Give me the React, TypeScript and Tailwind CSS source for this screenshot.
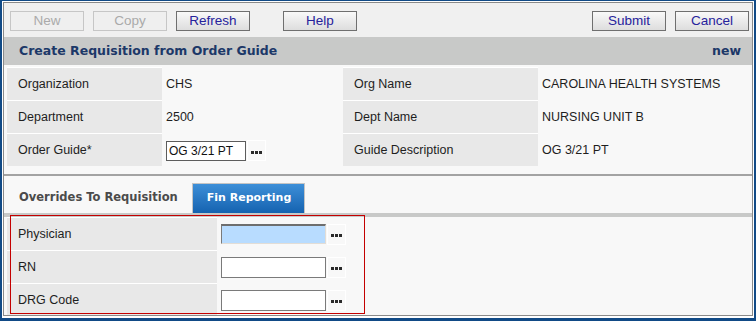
import type { ReactNode } from 'react';

const arial = "font-['Liberation_Sans',Arial,sans-serif]";
const verdana = "font-['DejaVu_Sans',Verdana,sans-serif]";

function ToolButton({ label, disabled }: { label: string; disabled?: boolean }) {
  return (
    <button
      className={
        disabled
          ? `h-[20px] w-[74px] border border-[#c6c6c6] bg-[#efefef] text-[13.5px] leading-none text-[#aaaaaa] ${arial}`
          : `h-[20px] w-[74px] border border-[#6f6f6f] bg-gradient-to-b from-[#f9f9f9] to-[#dddddd] text-[13.5px] leading-none text-[#26229c] ${arial}`
      }
    >
      {label}
    </button>
  );
}

function LookupButton() {
  return (
    <span className="ml-px flex h-[21px] w-[19px] items-center justify-center gap-px border border-white pt-[3px]">
      <i className="h-[3px] w-[3px] bg-[#2a2a2a]" />
      <i className="h-[3px] w-[3px] bg-[#2a2a2a]" />
      <i className="h-[3px] w-[3px] bg-[#2a2a2a]" />
    </span>
  );
}

function InfoRow({ l1, v1, l2, v2 }: { l1: string; v1: ReactNode; l2: string; v2: string }) {
  return (
    <div className="flex h-[33px]">
      <div className="flex w-[155px] items-center border-t border-white bg-[#e8e8e8] pl-[11px]">{l1}</div>
      <div className="flex w-[181px] items-center border-t border-transparent pl-[4px]">{v1}</div>
      <div className="flex w-[195px] items-center border-t border-white bg-[#e8e8e8] pl-[11px]">{l2}</div>
      <div className="flex flex-1 items-center border-t border-transparent pl-[4px]">{v2}</div>
    </div>
  );
}

function FormRow({ label, focused }: { label: string; focused?: boolean }) {
  return (
    <div className="flex h-[33px]">
      <div className="flex w-[210px] items-center border-t border-white bg-[#e8e8e8] pl-[11px]">{label}</div>
      <div className="flex flex-1 items-center pl-[4px] pt-px">
        {focused ? (
          <input className="h-[20px] w-[105px] border-t-2 border-l border-r border-b border-t-[#6e6e6e] border-l-[#7a7a7a] border-r-[#e2ddd6] border-b-[#e2ddd6] bg-[#b8dcff] outline-none" />
        ) : (
          <input className="h-[21px] w-[105px] border border-[#7a7a7a] bg-white outline-none" />
        )}
        <LookupButton />
      </div>
    </div>
  );
}

export default function App() {
  return (
    <div className="flex h-[321px] w-[756px] flex-col border-x-2 border-t border-b-[3px] border-[#114a86] bg-white p-px pb-[2px]">
      <div className={`relative flex flex-1 flex-col overflow-hidden border border-[#8a8a8a] bg-[#f8f8f8] text-[12.5px] text-[#1e1e1e] ${arial}`}>
        {/* toolbar */}
        <div className="flex h-[34px] shrink-0 items-start bg-[#f0f0f0] pl-[6px] pr-[3px] pt-[8px]">
          <div className="flex gap-[9px]">
            <ToolButton label="New" disabled />
            <ToolButton label="Copy" disabled />
            <ToolButton label="Refresh" />
            <div className="ml-[24px]">
              <ToolButton label="Help" />
            </div>
          </div>
          <div className="ml-auto flex gap-[9px]">
            <ToolButton label="Submit" />
            <ToolButton label="Cancel" />
          </div>
        </div>

        {/* title bar */}
        <div className={`flex h-[28px] shrink-0 items-center justify-between bg-[#c8c9c8] pl-[15px] pr-[11px] text-[12.5px] font-bold text-[#1c3868] ${verdana}`}>
          <span>Create Requisition from Order Guide</span>
          <span>new</span>
        </div>

        {/* header info */}
        <div className="shrink-0 border-b-2 border-[#a3a3a3] pb-[8px] pl-[3px] pt-[2px]">
          <InfoRow l1="Organization" v1="CHS" l2="Org Name" v2="CAROLINA HEALTH SYSTEMS" />
          <InfoRow l1="Department" v1="2500" l2="Dept Name" v2="NURSING UNIT B" />
          <InfoRow
            l1="Order Guide*"
            v1={
              <div className="flex items-center pt-px">
                <input
                  defaultValue="OG 3/21 PT"
                  className="h-[20px] w-[80px] border border-[#5c5c5c] bg-white px-[2px] text-[12px] text-[#111] outline-none"
                />
                <LookupButton />
              </div>
            }
            l2="Guide Description"
            v2="OG 3/21 PT"
          />
        </div>

        {/* tabs */}
        <div className="flex h-[37px] shrink-0 items-end pl-px">
          <div className={`flex h-[30px] items-center px-[14px] text-[11.5px] font-bold text-[#4b4b4b] ${verdana}`}>
            Overrides To Requisition
          </div>
          <div
            className={`flex h-[30px] items-center border-x border-t border-[#c4c4c4] bg-gradient-to-b from-[#3d8fd8] to-[#1463b0] pl-[14px] pr-[13px] text-[11px] font-bold text-white ${verdana}`}
          >
            Fin Reporting
          </div>
        </div>

        <div className="relative flex-1">
          <div className="h-[4px] bg-[#c8c9c8]" />
          <div className="pl-[3px]">
            <FormRow label="Physician" focused />
            <FormRow label="RN" />
            <FormRow label="DRG Code" />
          </div>
          <div className="pointer-events-none absolute left-[6px] top-[2px] h-[99px] w-[355px] border border-[#c40000]" />
        </div>
      </div>
    </div>
  );
}
